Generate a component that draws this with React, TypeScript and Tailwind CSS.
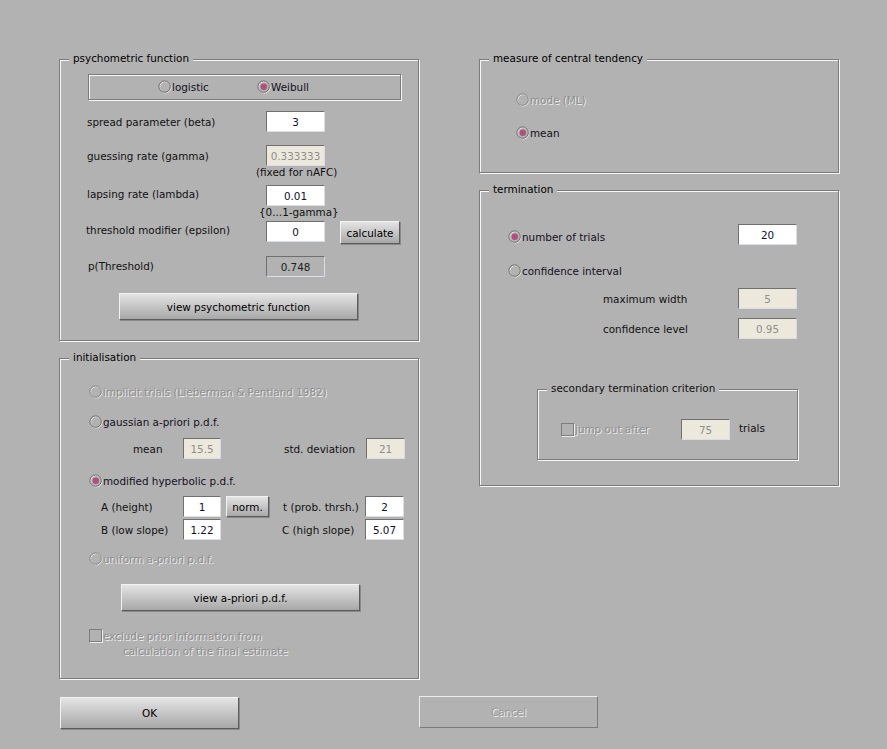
import React from "react";

const FONT = "font-['DejaVu_Sans',sans-serif] text-[10.4px] leading-[12px]";

function Panel({ title, className, children }: { title: string; className?: string; children?: React.ReactNode }) {
  return (
    <div className={`relative border border-[#7b7b7b] shadow-[1px_1px_0_#f6f6f6,inset_1px_1px_0_#f6f6f6] flex flex-col ${className ?? ""}`}>
      <div className="absolute -top-[8px] left-[9px] px-[4px] bg-[#b2b2b2] text-black whitespace-nowrap">{title}</div>
      {children}
    </div>
  );
}

function Radio({ checked, disabled, label }: { checked?: boolean; disabled?: boolean; label: string }) {
  return (
    <div className="flex items-center h-[13px] whitespace-nowrap">
      <svg width="14" height="14" viewBox="0 0 14 14" className="shrink-0">
        <circle cx="7.3" cy="7.3" r="5.7" fill="none" stroke="#ededed" strokeWidth="1" />
        <circle cx="6.6" cy="6.6" r="5.7" fill="none" stroke={disabled ? "#858585" : "#6a6a6a"} strokeWidth="1" />
        {checked && <circle cx="6.8" cy="6.8" r="3.2" fill="#b24f7b" />}
      </svg>
      <span className={disabled ? "text-[#8f8f8f] [text-shadow:1px_1px_0_#ececec]" : "text-[#141020]"}>{label}</span>
    </div>
  );
}

function Check({ label }: { label: string }) {
  return (
    <div className="flex items-center h-[13px] whitespace-nowrap">
      <div className="w-[13px] h-[13px] shrink-0 border border-[#7e7e7e] shadow-[1px_1px_0_#ededed]" />
      <span className="ml-[1px] text-[#8f8f8f] [text-shadow:1px_1px_0_#ececec]">{label}</span>
    </div>
  );
}

function Field({ value, w, kind = "edit" }: { value: string; w: number; kind?: "edit" | "disabled" | "readonly" }) {
  const bg = kind === "edit" ? "bg-white text-[#101030]" : kind === "disabled" ? "bg-[#ece9dc] text-[#8e8e8e]" : "bg-[#b2b2b2] text-[#202020]";
  return (
    <div
      style={{ width: w }}
      className={`h-[21px] shrink-0 flex items-center justify-center border border-t-[#6f6f6f] border-l-[#6f6f6f] border-b-[#dcdce6] border-r-[#dcdce6] ${bg}`}
    >
      {value}
    </div>
  );
}

function Btn({ label, w, h }: { label: string; w: number; h: number }) {
  return (
    <div
      style={{ width: w, height: h }}
      className="shrink-0 flex items-center justify-center text-black border border-t-[#f2f2f2] border-l-[#f2f2f2] border-b-[#5c5c5c] border-r-[#5c5c5c] shadow-[1px_1px_0_#8a8a8a] bg-linear-to-b from-[#e4e4e4] to-[#a8a8a8] whitespace-nowrap"
    >
      {label}
    </div>
  );
}

function Lbl({ children, w, className }: { children: React.ReactNode; w?: number; className?: string }) {
  return (
    <div style={w ? { width: w } : undefined} className={`shrink-0 whitespace-nowrap text-[#111] ${className ?? ""}`}>
      {children}
    </div>
  );
}

export default function App() {
  return (
    <div className={`w-[887px] h-[749px] bg-[#b2b2b2] overflow-hidden pl-[59px] pt-[59px] flex flex-col ${FONT}`}>
      <div className="flex">
        {/* left column */}
        <div className="flex flex-col w-[360px]">
          <Panel title="psychometric function" className="h-[282px]">
            <div className="mt-[14px] ml-[28px] w-[313px] h-[26px] border border-[#7b7b7b] shadow-[1px_1px_0_#f6f6f6,inset_1px_1px_0_#f6f6f6] flex items-center pl-[69px]">
              <div className="w-[99px]"><Radio label="logistic" /></div>
              <Radio checked label="Weibull" />
            </div>
            <div className="mt-[11px] ml-[27px] h-[21px] flex items-center">
              <Lbl w={179}>spread parameter (beta)</Lbl>
              <Field value="3" w={59} />
            </div>
            <div className="mt-[13px] ml-[27px] h-[21px] flex items-center">
              <Lbl w={179}>guessing rate (gamma)</Lbl>
              <Field value="0.333333" w={59} kind="disabled" />
            </div>
            <div className="ml-[196px] h-[12px] whitespace-nowrap text-[#111]">(fixed for nAFC)</div>
            <div className="mt-[7px] ml-[27px] h-[21px] flex items-center">
              <Lbl w={179} className="-mt-[3px]">lapsing rate (lambda)</Lbl>
              <Field value="0.01" w={59} />
            </div>
            <div className="ml-[199px] h-[12px] whitespace-nowrap text-[#111]">{"{0...1-gamma}"}</div>
            <div className="mt-[3px] ml-[26px] h-[23px] flex items-start">
              <Lbl w={180} className="mt-[3px]">threshold modifier (epsilon)</Lbl>
              <Field value="0" w={59} />
              <div className="ml-[15px]"><Btn label="calculate" w={60} h={23} /></div>
            </div>
            <div className="mt-[12px] ml-[28px] h-[21px] flex items-center">
              <Lbl w={178} className="-mt-[2px]">p(Threshold)</Lbl>
              <Field value="0.748" w={59} kind="readonly" />
            </div>
            <div className="mt-[16px] ml-[59px]">
              <Btn label="view psychometric function" w={239} h={27} />
            </div>
          </Panel>

          <Panel title="initialisation" className="mt-[17px] h-[321px]">
            <div className="mt-[26px] ml-[29px]"><Radio disabled label="implicit trials (Lieberman & Pentland 1982)" /></div>
            <div className="mt-[17px] ml-[29px]"><Radio label="gaussian a-priori p.d.f." /></div>
            <div className="mt-[10px] ml-[73px] h-[21px] flex items-center">
              <Lbl w={50} className="mt-[1px]">mean</Lbl>
              <Field value="15.5" w={38} kind="disabled" />
              <Lbl w={82} className="ml-[63px]">std. deviation</Lbl>
              <Field value="21" w={39} kind="disabled" />
            </div>
            <div className="mt-[15px] ml-[29px]"><Radio checked label="modified hyperbolic p.d.f." /></div>
            <div className="mt-[9px] ml-[41px] h-[21px] flex items-center">
              <Lbl w={82}>A (height)</Lbl>
              <Field value="1" w={38} />
              <div className="ml-[5px]"><Btn label="norm." w={43} h={21} /></div>
              <Lbl w={82} className="ml-[14px]">t (prob. thrsh.)</Lbl>
              <Field value="2" w={39} />
            </div>
            <div className="mt-[2px] ml-[41px] h-[21px] flex items-center">
              <Lbl w={82}>B (low slope)</Lbl>
              <Field value="1.22" w={38} />
              <Lbl w={83} className="ml-[61px]">C (high slope)</Lbl>
              <Field value="5.07" w={39} />
            </div>
            <div className="mt-[12px] ml-[29px]"><Radio disabled label="uniform a-priori p.d.f." /></div>
            <div className="mt-[19px] ml-[61px]">
              <Btn label="view a-priori p.d.f." w={239} h={27} />
            </div>
            <div className="mt-[18px] ml-[29px]"><Check label="exclude prior information from" /></div>
            <div className="mt-[3px] ml-[63px] h-[12px] whitespace-nowrap text-[#8f8f8f] [text-shadow:1px_1px_0_#ececec]">calculation of the final estimate</div>
          </Panel>
        </div>

        {/* right column */}
        <div className="flex flex-col w-[360px] ml-[60px]">
          <Panel title="measure of central tendency" className="h-[114px]">
            <div className="mt-[33px] ml-[36px]"><Radio disabled label="mode (ML)" /></div>
            <div className="mt-[20px] ml-[36px]"><Radio checked label="mean" /></div>
          </Panel>

          <Panel title="termination" className="mt-[17px] h-[296px]">
            <div className="mt-[33px] ml-[28px] h-[21px] flex items-center">
              <div className="w-[230px] mt-[5px]"><Radio checked label="number of trials" /></div>
              <Field value="20" w={59} />
            </div>
            <div className="mt-[19px] ml-[28px]"><Radio label="confidence interval" /></div>
            <div className="mt-[11px] ml-[123px] h-[21px] flex items-center">
              <Lbl w={135}>maximum width</Lbl>
              <Field value="5" w={59} kind="disabled" />
            </div>
            <div className="mt-[9px] ml-[123px] h-[21px] flex items-center">
              <Lbl w={135}>confidence level</Lbl>
              <Field value="0.95" w={59} kind="disabled" />
            </div>
            <div className="mt-[50px] ml-[57px] w-[261px] h-[71px] relative border border-[#7b7b7b] shadow-[1px_1px_0_#f6f6f6,inset_1px_1px_0_#f6f6f6] flex flex-col">
              <div className="absolute -top-[8px] left-[9px] px-[4px] bg-[#b2b2b2] text-[#111] whitespace-nowrap">secondary termination criterion</div>
              <div className="mt-[29px] ml-[23px] h-[21px] flex items-center">
                <div className="w-[120px] -mt-[1px]"><Check label="jump out after" /></div>
                <Field value="75" w={49} kind="disabled" />
                <Lbl className="ml-[9px] -mt-[3px]">trials</Lbl>
              </div>
            </div>
          </Panel>
        </div>
      </div>

      <div className="mt-[18px] flex items-start">
        <div className="ml-[1px]"><Btn label="OK" w={179} h={32} /></div>
        <div className="ml-[180px] -mt-[1px] w-[179px] h-[32px] flex items-center justify-center border border-t-[#ececec] border-l-[#ececec] border-b-[#7a7a7a] border-r-[#7a7a7a] text-[#9a9a9a] [text-shadow:1px_1px_0_#f0f0f0]">
          Cancel
        </div>
      </div>
    </div>
  );
}
